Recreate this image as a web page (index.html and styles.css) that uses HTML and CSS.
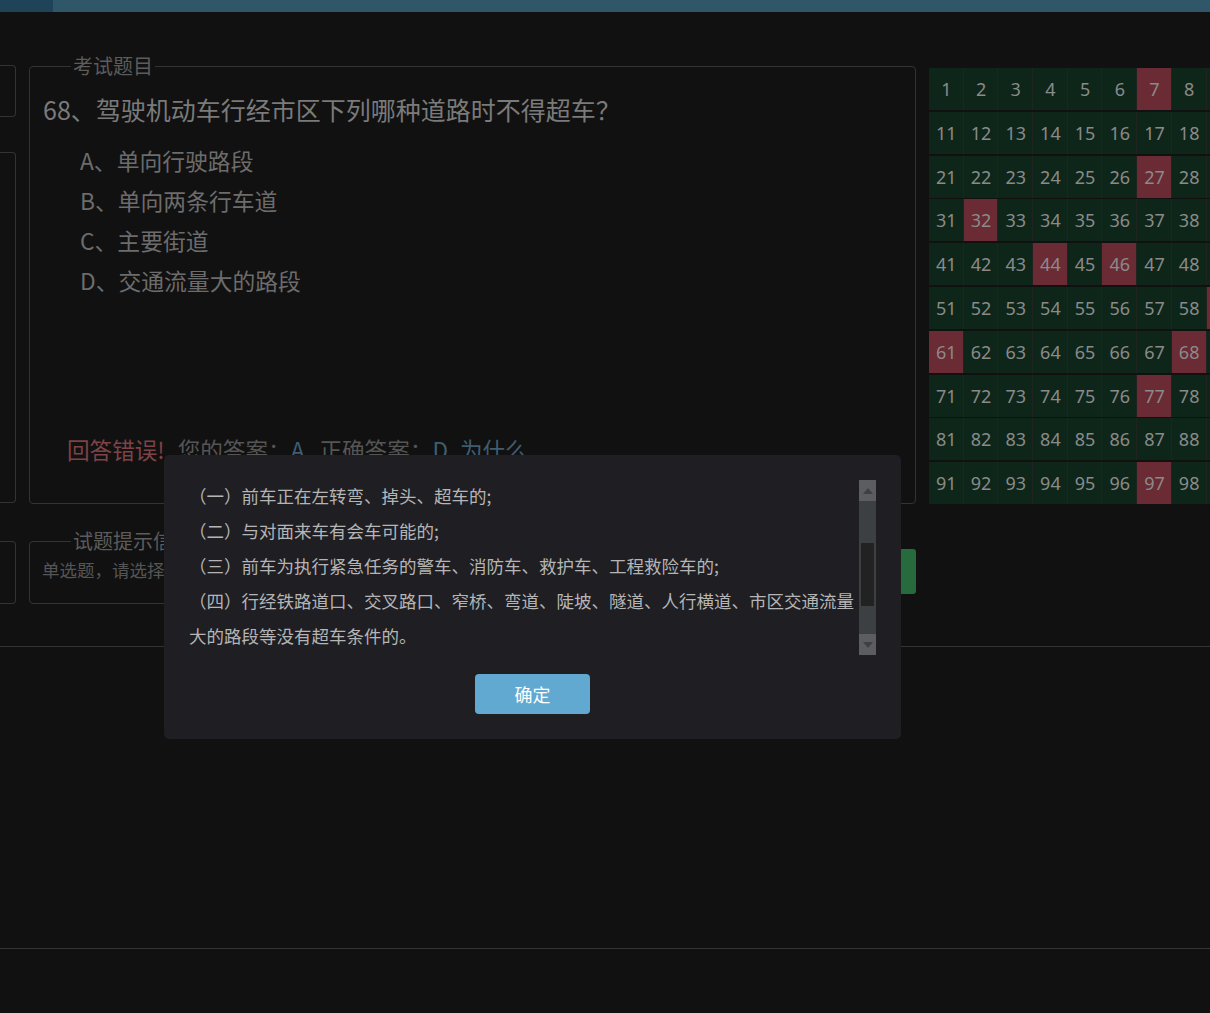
FILE: index.html
```html
<!DOCTYPE html>
<html lang="zh-CN">
<head>
<meta charset="utf-8">
<title>考试</title>
<link rel="stylesheet" href="styles.css">
</head>
<body>
<div class="topbar"><div class="topbar-seg"></div></div>
<main class="main">
  <div class="row row-1">
    <div class="side">
      <div class="side-box side-box-1"></div>
      <div class="side-box side-box-2"></div>
    </div>
    <fieldset class="panel panel-q">
      <legend class="legend">考试题目</legend>
      <div class="question">68、驾驶机动车行经市区下列哪种道路时不得超车？</div>
      <ul class="options">
        <li>A、单向行驶路段</li>
        <li>B、单向两条行车道</li>
        <li>C、主要街道</li>
        <li>D、交通流量大的路段</li>
      </ul>
      <div class="result">
        <span class="wrong">回答错误!</span><span class="label label-1">您的答案：</span><span class="ans ans-1">A</span><span class="label label-2">正确答案：</span><span class="ans ans-2">D</span><span class="why">为什么</span>
      </div>
    </fieldset>
    <div class="grid" id="grid"></div>
  </div>
  <div class="row row-2">
    <div class="side">
      <div class="side-box side-box-3"></div>
    </div>
    <fieldset class="panel panel-hint">
      <legend class="legend">试题提示信息</legend>
      <div class="hint">单选题，请选择你认为正确的答案！</div>
    </fieldset>
    <button class="submit" type="button"></button>
  </div>
</main>
<hr class="rule rule-1">
<hr class="rule rule-2">

<div class="modal">
  <div class="modal-body">
    <div class="modal-text">
      <p>（一）前车正在左转弯、掉头、超车的;</p>
      <p>（二）与对面来车有会车可能的;</p>
      <p>（三）前车为执行紧急任务的警车、消防车、救护车、工程救险车的;</p>
      <p>（四）行经铁路道口、交叉路口、窄桥、弯道、陡坡、隧道、人行横道、市区交通流量大的路段等没有超车条件的。</p>
    </div>
    <div class="sb">
      <div class="sb-btn sb-up"><span class="tri tri-up"></span></div>
      <div class="sb-track"><div class="sb-thumb"></div></div>
      <div class="sb-btn sb-down"><span class="tri tri-down"></span></div>
    </div>
  </div>
  <button class="ok" type="button">确定</button>
</div>

<script>
  (function () {
    var wrong = [7, 27, 32, 44, 46, 59, 61, 68, 77, 97];
    var g = document.getElementById('grid');
    for (var i = 1; i <= 100; i++) {
      var c = document.createElement('div');
      c.className = 'cell' + (wrong.indexOf(i) >= 0 ? ' cell-wrong' : '');
      c.textContent = i;
      g.appendChild(c);
    }
  })();
</script>
</body>
</html>
```

FILE: styles.css
```css
html, body {
  margin: 0;
  padding: 0;
}
body {
  width: 1210px;
  height: 1013px;
  overflow: hidden;
  background: #111111;
  font-family: "Noto Sans CJK SC", "Noto Sans", sans-serif;
  position: relative;
}

.topbar {
  height: 12px;
  background: #30566a;
}
.topbar-seg {
  width: 53px;
  height: 12px;
  background: #1f4459;
}

.main {
  padding-top: 41px;
}
.row {
  display: flex;
  align-items: flex-start;
}
.side {
  flex: 0 0 16px;
  width: 16px;
  display: flex;
  flex-direction: column;
}
.side-box {
  box-sizing: border-box;
  border: 1px solid #333;
  border-left: 0;
  border-radius: 0 4px 4px 0;
}
.side-box-1 {
  margin-top: 12px;
  height: 52px;
}
.side-box-2 {
  margin-top: 35px;
  height: 351px;
}
.side-box-3 {
  margin-top: 13px;
  height: 63px;
}

.panel {
  flex: 0 0 auto;
  box-sizing: border-box;
  margin: 0 0 0 13px;
  padding: 0 13px;
  border: 1px solid #333;
  border-radius: 4px;
  min-width: 0;
}
.legend {
  margin-left: 28px;
  padding: 0 2px;
  font-size: 20px;
  line-height: 26px;
  color: #5c5c5c;
}
.panel-q {
  width: 887px;
  height: 451px;
}
.question {
  margin-top: 12px;
  font-size: 25px;
  line-height: 36px;
  color: #7a7a7a;
  white-space: nowrap;
}
.options {
  list-style: none;
  margin: 14px 0 0 37px;
  padding: 0;
  font-size: 22.8px;
  line-height: 40px;
  color: #6c6c6c;
}
.result {
  margin: 134px 0 0 24px;
  font-size: 22.6px;
  line-height: 30px;
  white-space: nowrap;
}
.wrong {
  color: #7e4247;
}
.label {
  color: #555;
}
.label-1 {
  margin-left: 13px;
}
.label-2 {
  margin-left: 15px;
}
.ans {
  color: #3f5d70;
}
.why {
  color: #3f5d70;
  margin-left: 12px;
}

.grid {
  flex: 0 0 auto;
  margin: 15px 0 0 13px;
  display: grid;
  grid-template-columns: repeat(10, 34.7px);
  grid-auto-rows: 42px;
  row-gap: 1.8px;
  background: #111;
}
.cell {
  box-sizing: border-box;
  border-right: 1px solid #1f2420;
  padding-left: 1px;
  background: #0e2619;
  color: #8a8a8a;
  font-family: "Noto Sans", "Open Sans", sans-serif;
  font-size: 18px;
  display: flex;
  align-items: center;
  justify-content: center;
}
.cell-wrong {
  background: #6a2b35;
}

.row-2 {
  margin-top: 24px;
}
.panel-hint {
  width: 720px;
  height: 76px;
}
.hint {
  margin-top: 5px;
  margin-left: -1px;
  font-size: 17.5px;
  line-height: 22px;
  color: #555;
  white-space: nowrap;
}
.submit {
  flex: 0 0 auto;
  margin: 21px 0 0 37px;
  width: 130px;
  height: 45px;
  border: 0;
  border-radius: 3px;
  background: #266a3d;
}

.rule {
  border: 0;
  height: 1px;
  margin: 0;
  background: #333;
}
.rule-1 {
  margin-top: 42px;
}
.rule-2 {
  margin-top: 301px;
}

.modal {
  position: absolute;
  left: 164px;
  top: 455px;
  width: 737px;
  height: 284px;
  box-sizing: border-box;
  padding: 25px;
  background: #1e1e23;
  border-radius: 5px;
}
.modal-body {
  display: flex;
  height: 175px;
}
.modal-text {
  flex: 1 1 auto;
  width: 670px;
  overflow: hidden;
  font-size: 17.5px;
  line-height: 35px;
  color: #b5b5b5;
}
.modal-text p {
  margin: 0;
}
.modal-text p:first-child {
  margin-top: -2px;
}
.sb {
  flex: 0 0 17px;
  display: flex;
  flex-direction: column;
  background: #3c4043;
}
.sb-btn {
  height: 21px;
  background: #5c5d60;
  display: flex;
  align-items: center;
  justify-content: center;
}
.tri {
  width: 0;
  height: 0;
  border-left: 5.5px solid transparent;
  border-right: 5.5px solid transparent;
}
.tri-up {
  border-bottom: 6px solid #3d4145;
}
.tri-down {
  border-top: 6px solid #3d4145;
}
.sb-track {
  flex: 1 1 auto;
}
.sb-thumb {
  margin: 42px 0 0 2px;
  width: 13px;
  height: 63px;
  background: #222;
}

.ok {
  display: block;
  margin: 19px auto 0;
  width: 115px;
  height: 40px;
  border: 0;
  border-radius: 4px;
  background: #62a9d2;
  color: #fff;
  font-family: "Noto Sans CJK SC", sans-serif;
  font-size: 18px;
  padding: 0;
}
```
